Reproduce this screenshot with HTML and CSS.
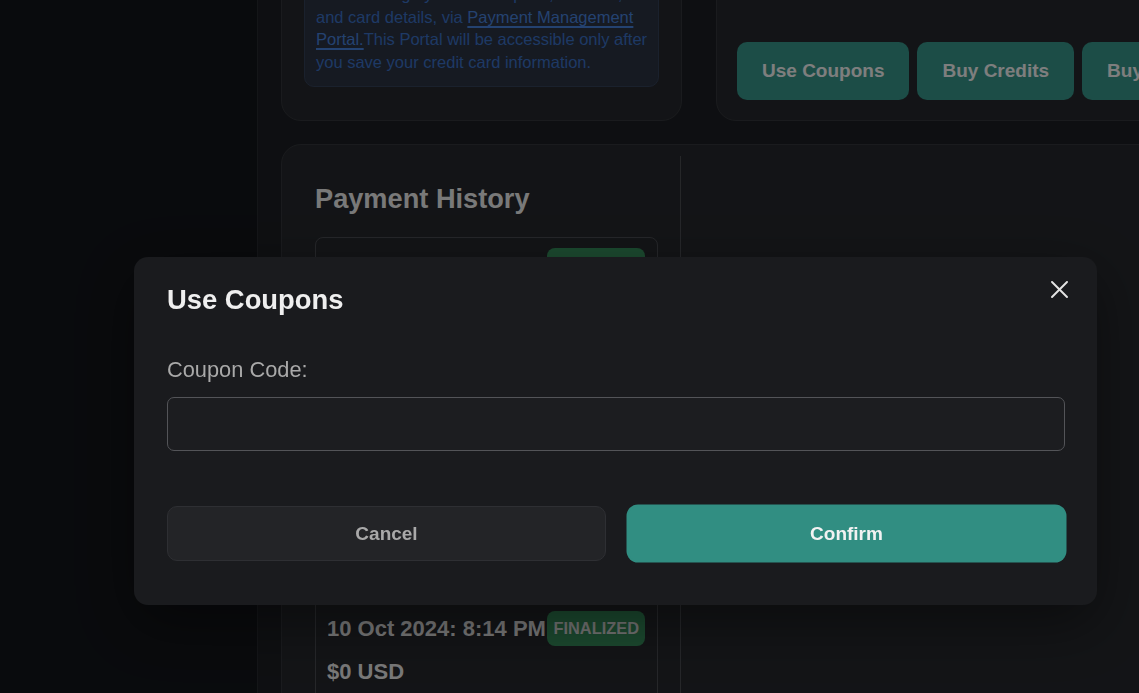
FILE: index.html
```html
<!DOCTYPE html>
<html lang="en">
<head>
<meta charset="utf-8">
<title>Billing</title>
<link rel="stylesheet" href="styles.css">
</head>
<body>
<div class="app">
  <aside class="sidebar"></aside>
  <main class="main">
    <div class="content">
      <div class="top-row">
        <section class="card card-sub">
          <h2 class="card-title">Subscription</h2>
          <p class="plan-line">Current plan: Free</p>
          <div class="note">Note: Manage your subscription, invoices, and card details, via <a href="#" class="note-link">Payment Management Portal.</a>This Portal will be accessible only after you save your credit card information.</div>
        </section>
        <section class="card card-actions">
          <div>
            <h2 class="card-title">Credits</h2>
            <p class="plan-line">Available credits: 0</p>
          </div>
          <div class="action-buttons">
            <button class="action-btn">Use Coupons</button>
            <button class="action-btn">Buy Credits</button>
            <button class="action-btn">Buy Subscription</button>
          </div>
        </section>
      </div>
      <section class="card card-history">
        <div class="history-col">
          <h2 class="history-title">Payment History</h2>
          <div class="history-list">
            <div class="history-item">
              <div class="item-head"><span class="item-date">10 Dec 2024: 8:14 PM</span><span class="badge">FINALIZED</span></div>
              <div class="item-amount">$0 USD</div>
              <div class="item-desc">Monthly subscription</div>
              <a href="#" class="item-link">View Invoice</a>
            </div>
            <div class="history-item">
              <div class="item-head"><span class="item-date">10 Nov 2024: 8:14 PM</span><span class="badge">FINALIZED</span></div>
              <div class="item-amount">$0 USD</div>
              <div class="item-desc">Monthly subscription</div>
              <a href="#" class="item-link">View Invoice</a>
            </div>
            <div class="history-item">
              <div class="item-head"><span class="item-date">10 Oct 2024: 8:14 PM</span><span class="badge">FINALIZED</span></div>
              <div class="item-amount">$0 USD</div>
              <div class="item-desc">Monthly subscription</div>
              <a href="#" class="item-link">View Invoice</a>
            </div>
          </div>
        </div>
        <div class="history-detail"></div>
      </section>
    </div>
  </main>
</div>

<div class="overlay">
  <div class="modal" role="dialog" aria-labelledby="modal-title">
    <h2 class="modal-title" id="modal-title">Use Coupons</h2>
    <button class="modal-close" aria-label="Close">
      <svg width="17" height="17" viewBox="0 0 17 17" fill="none" stroke="currentColor" stroke-width="1.9" stroke-linecap="round"><line x1="1" y1="1" x2="16" y2="16"/><line x1="16" y1="1" x2="1" y2="16"/></svg>
    </button>
    <label class="field-label" for="coupon">Coupon Code:</label>
    <input id="coupon" class="field-input" type="text">
    <div class="modal-actions">
      <button class="btn btn-cancel">Cancel</button>
      <button class="btn btn-confirm">Confirm</button>
    </div>
  </div>
</div>
</body>
</html>
```

FILE: styles.css
```css
* { box-sizing: border-box; }

html, body {
  margin: 0;
  height: 100%;
}

body {
  font-family: "Liberation Sans", Arial, sans-serif;
  background: #1b1d21;
  overflow: hidden;
}

.app {
  display: flex;
  height: 693px;
}

.sidebar {
  width: 258px;
  flex: none;
  background: #121418;
  border-right: 1px solid #26282d;
}

.main {
  flex: 1;
  min-width: 0;
  overflow: hidden;
  padding-left: 23px;
  background: #1b1d21;
}

.content {
  width: 955px;
  margin-top: -147px;
}

.top-row {
  display: flex;
  gap: 34px;
}

.card {
  background: #24262a;
  border: 1px solid #303237;
  border-radius: 20px;
}

.card-sub {
  width: 401px;
  flex: none;
  padding: 30px 22px 33px;
}

.card-title {
  margin: 0 0 16px;
  font-size: 26px;
  line-height: 30px;
  color: #e0e0e0;
}

.plan-line {
  margin: 0 0 16px;
  font-size: 16px;
  line-height: 24px;
  color: #b0b0b0;
}

.note {
  background: #28303e;
  border: 1px solid #313c52;
  border-radius: 10px;
  padding: 12px 9px 13px 11px;
  font-size: 16.5px;
  line-height: 22.5px;
  color: #3769b9;
}

.note-link {
  color: #4379cc;
  text-decoration: underline;
  text-decoration-thickness: 1.5px;
  text-decoration-skip-ink: none;
  text-underline-offset: 3px;
}

.card-actions {
  flex: 1;
  display: flex;
  flex-direction: column;
  justify-content: space-between;
  padding: 30px 20px 20px 20px;
}

.action-buttons {
  display: flex;
  gap: 8px;
}

.action-btn {
  height: 58px;
  padding: 0 25px;
  border: none;
  border-radius: 10px;
  background: #338c81;
  color: #e6e6e6;
  font-family: inherit;
  font-size: 19px;
  font-weight: 700;
  white-space: nowrap;
}

.card-history {
  margin-top: 23px;
  display: flex;
  min-height: 700px;
}

.history-col {
  width: 398px;
  flex: none;
  padding: 38px 22px 0 33px;
}

.history-title {
  margin: 0 0 22px;
  font-size: 27.2px;
  line-height: 32px;
  color: #dcdcdc;
}

.history-list {
  border: 1px solid #45474c;
  border-radius: 8px;
}

.history-item {
  padding: 10px 12px 10px 11px;
  border-bottom: 1px solid #45474c;
}

.item-head {
  display: flex;
  align-items: center;
  gap: 2px;
}

.item-date {
  flex: 1;
  min-width: 0;
  overflow: hidden;
  font-size: 22px;
  font-weight: 700;
  color: #dcdcdc;
  white-space: nowrap;
}

.badge {
  flex: none;
  height: 35px;
  display: inline-flex;
  align-items: center;
  padding: 0 6px;
  border-radius: 8px;
  background: #338757;
  color: #d4d4d4;
  font-size: 16.4px;
  font-weight: 700;
}

.item-amount {
  margin-top: 13px;
  font-size: 22px;
  line-height: 26px;
  font-weight: 700;
  color: #dcdcdc;
}

.item-desc {
  margin-top: 12px;
  font-size: 15px;
  line-height: 22.5px;
  color: #a0a0a0;
}

.item-link {
  display: flex;
  align-items: center;
  margin-top: 12px;
  height: 40px;
  color: #3769b9;
  font-size: 15px;
}

.history-detail {
  flex: 1;
  margin-top: 11px;
  border-left: 1px solid #45474c;
}

/* Modal */
.overlay {
  position: fixed;
  inset: 0;
  background: rgba(0, 0, 0, 0.45);
}

.modal {
  position: absolute;
  left: 134px;
  top: 257px;
  width: 963px;
  padding: 27px 32px 44px 33px;
  background: #1a1b1e;
  border-radius: 14px;
  box-shadow: 0 18px 60px rgba(0, 0, 0, 0.45);
}

.modal-title {
  margin: 0;
  font-size: 27.4px;
  line-height: 31px;
  font-weight: 700;
  color: #efefef;
}

.modal-close {
  position: absolute;
  top: 24px;
  right: 29px;
  padding: 0;
  border: none;
  background: none;
  color: #e4e4e4;
  display: flex;
}

.field-label {
  display: block;
  margin-top: 41.5px;
  font-size: 21.8px;
  line-height: 25px;
  color: #a9a9a9;
}

.field-input {
  display: block;
  width: 100%;
  height: 54px;
  margin-top: 15.5px;
  background: #1c1d20;
  border: 1px solid #535458;
  border-radius: 7px;
  color: #eee;
  font-family: inherit;
  font-size: 18px;
  padding: 0 14px;
  outline: none;
}

.modal-actions {
  display: flex;
  gap: 22px;
  margin-top: 55px;
}

.btn {
  flex: 1;
  height: 55px;
  border-radius: 10px;
  font-family: inherit;
  font-size: 19px;
  font-weight: 700;
}

.btn-cancel {
  background: #232427;
  border: 1px solid #2e2f33;
  color: #a9a9a9;
}

.btn-confirm {
  background: #318e82;
  border: none;
  color: #f2f2f2;
  box-shadow: 0 0 0 1.5px #318e82;
}
```
